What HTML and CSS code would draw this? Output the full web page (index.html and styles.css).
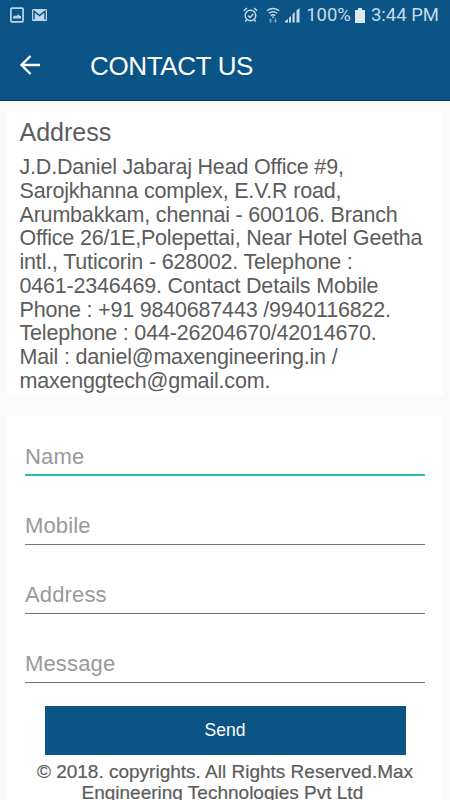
FILE: index.html
```html
<!DOCTYPE html>
<html lang="en">
<head>
    <meta charset="utf-8">
    <title>Contact Us</title>
    <link rel="stylesheet" href="styles.css">
</head>
<body>
    <header class="header">
        <div class="status">
            <svg class="status-left" width="40" height="18" viewBox="0 0 40 18">
                <rect x="0.9" y="2.2" width="12.2" height="13.6" rx="1" fill="none" stroke="#bfd6e8" stroke-width="1.7"/>
                <path d="M3 12.500V11l1.800-1.500 1.500.7L8 8.200l1.500 1.500 1.500.5v2.300z" fill="#bfd6e8"/>
                <rect x="22" y="3" width="15" height="12" rx="1.200" fill="#bfd6e8"/>
                <path d="M24 13.500V5.200l5.500 4.300L35 5.200v8.300" fill="none" stroke="#0a5585" stroke-width="1.500"/>
            </svg>
            <div class="status-right">
                <svg width="60" height="20" viewBox="0 0 60 20">
                    <g fill="none" stroke="#c5dbea" stroke-width="1.400">
                        <circle cx="7.500" cy="10.500" r="5.300"/>
                        <path d="M5 10.500l2 2 3.300-3.500M.8 5.800L4 3M14.200 5.800L11 3M3.500 15l-1.200 1.500M11.500 15l1.200 1.500"/>
                        <path d="M23.800 5.700q6.200-4.500 12.400 0M25.800 8.300q4.200-3.200 8.400 0M27.800 10.600q2.200-1.600 4.400 0"/>
                    </g>
                    <path d="M28.800 12l1.200 1.200 1.200-1.200-1.200-.8z" fill="#c5dbea"/>
                    <path d="M25.500 15.500l2-2 2 2h-1.300v2.500h-1.400v-2.500zM30.500 15.500l2 2.500 2-2.500h-1.300v-2h-1.400v2z" fill="#6f9fbf"/>
                    <path d="M42 17.500V16l3-2v3.500zM46 17.500v-5l2-1.500v6.500zM49.500 17.500V9l2.200-2v10.500zM53.500 17.500V5.500L56.500 3v14.500z" fill="#c5dbea"/>
                </svg>
                <span class="percent">100%</span>
                <svg class="battery" width="10" height="15" viewBox="0 0 10 15">
                    <path d="M3 0h4v2h3v13H0V2h3z" fill="#dbe8f2"/>
                </svg>
                <span class="clock">3:44 PM</span>
            </div>
        </div>
        <div class="toolbar">
            <svg width="22" height="22" viewBox="0 0 22 22">
                <path d="M21 11H3M11.500 2L2.500 11l9 9" fill="none" stroke="#fff" stroke-width="2.400"/>
            </svg>
            <h1 class="title">CONTACT US</h1>
        </div>
    </header>

    <section class="card address">
        <h2 class="address-title">Address</h2>
        <p class="address-text">J.D.Daniel Jabaraj Head Office #9,<br>
            Sarojkhanna complex, E.V.R road,<br>
            Arumbakkam, chennai - 600106. Branch<br>
            Office 26/1E,Polepettai, Near Hotel Geetha<br>
            intl., Tuticorin - 628002. Telephone :<br>
            0461-2346469. Contact Details Mobile<br>
            Phone : +91 9840687443 /9940116822.<br>
            Telephone : 044-26204670/42014670.<br>
            Mail : daniel@maxengineering.in /<br>
            maxenggtech@gmail.com.</p>
    </section>

    <form class="card form">
        <input class="field active" type="text" placeholder="Name">
        <input class="field" type="text" placeholder="Mobile">
        <input class="field" type="text" placeholder="Address">
        <input class="field" type="text" placeholder="Message">
        <button class="send" type="button">Send</button>
        <p class="copyright">© 2018. copyrights. All Rights Reserved.Max<br>Engineering Technologies Pvt Ltd&nbsp;</p>
    </form>
</body>
</html>
```

FILE: styles.css
```css
*{
    box-sizing: border-box;
}
body{
    margin: 0;
    height: 800px;
    overflow: hidden;
    background-color: #fafafa;
    font-family: "Liberation Sans", Arial, sans-serif;
    color: #5c5c5c;
}
h1, h2, p{
    margin: 0;
    font-weight: 400;
}
.header{
    height: 101px;
    background-color: #0a5585;
    border-bottom: 1px solid #063078;
}
.status{
    height: 30px;
    padding: 0 11px 0 10px;
    display: flex;
    justify-content: space-between;
    align-items: center;
}
.status-right{
    display: flex;
    align-items: center;
    font-family: Roboto, sans-serif;
    font-size: 18.5px;
    color: #c5dbea;
}
.percent{
    margin-left: 3px;
}
.battery{
    margin: 0 6px 0 4px;
}
.toolbar{
    height: 70px;
    padding-left: 19px;
    display: flex;
    align-items: center;
    color: #fff;
}
.title{
    margin-left: 49px;
    padding-top: 2px;
    font-size: 26px;
    line-height: 30px;
    letter-spacing: -0.35px;
}
.card{
    margin: 0 7px;
    background-color: #fff;
    border-radius: 2px;
}
.address{
    height: 283px;
    margin-top: 11px;
    padding: 5px 0 0 12.5px;
}
.address-title{
    font-size: 25px;
    line-height: 30px;
}
.address-text{
    margin-top: 9px;
    font-size: 21.5px;
    line-height: 23.75px;
    letter-spacing: -0.19px;
    white-space: nowrap;
}
.form{
    height: 400px;
    margin-top: 21px;
    padding: 22px 18px 0;
}
.field{
    display: block;
    width: 100%;
    height: 37px;
    margin: 0 0 32px;
    padding: 0;
    border: none;
    border-bottom: 1px solid #777;
    border-radius: 0;
    background: none;
    outline: none;
    font-family: inherit;
    font-size: 22px;
    letter-spacing: 0.15px;
}
.field.active{
    height: 38px;
    padding-top: 2px;
    border-bottom: 2px solid #26bfae;
}
.field::placeholder{
    color: #999;
}
.send{
    display: block;
    width: 361px;
    height: 49px;
    margin: -9px auto 0;
    border: none;
    background-color: #0a5585;
    color: #fff;
    font-family: inherit;
    font-size: 17.5px;
}
.copyright{
    margin: 6px -18px 0;
    font-size: 19px;
    line-height: 21px;
    text-align: center;
    white-space: nowrap;
    -webkit-text-stroke: 0.2px #5c5c5c;
}
```
